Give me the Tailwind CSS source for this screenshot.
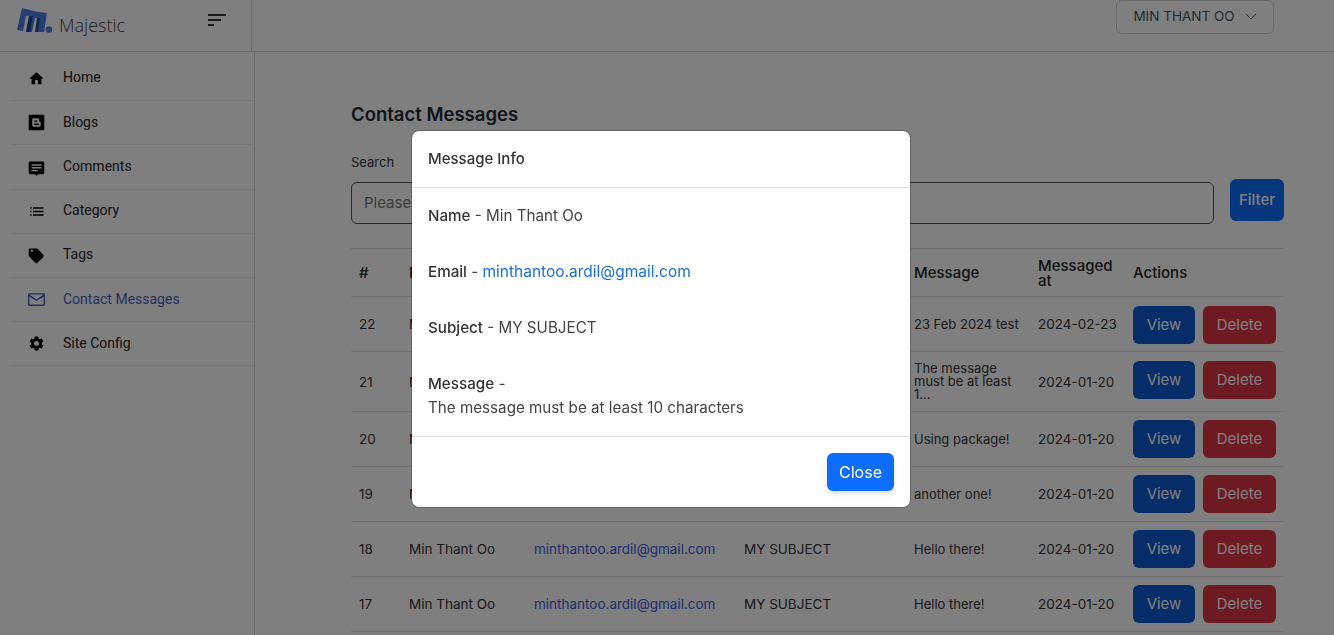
<!DOCTYPE html>
<html lang="en">
<head>
  <meta charset="UTF-8">
  <script src="https://cdn.jsdelivr.net/npm/@tailwindcss/browser@4"></script>
  <title>Contact Messages</title>
</head>
<body class="h-[635px] overflow-hidden bg-white font-['Inter',sans-serif] text-[#212529]">
  <!-- header -->
  <header class="flex h-[52px] border-b border-[#d8d8d8]">
    <div class="flex w-[252px] shrink-0 items-center border-r border-[#d8d8d8] pl-[17px]">
      <svg class="h-[26px] w-[36px] -translate-y-[5px]" viewBox="0 0 36 26">
        <path d="M5 0 L21 4 L30 5 L27 24 L19 24 L21 10 L18 10 L15 24 L9 24 L12 8 L9 8 L6 23 L0 22 Z" fill="#4d7fe0"/>
        <path d="M12 8 L16 8 L13 24 L9 24 Z" fill="#2348a0"/>
        <path d="M20 10 L23 10 L21 24 L18 24 Z" fill="#2348a0"/>
        <circle cx="32" cy="21.500" r="3.200" fill="#4d7fe0"/>
      </svg>
      <span class="ml-[6px] font-['Open_Sans',sans-serif] text-[18px] font-light text-[#3f3f46]">Majestic</span>
      <div class="ml-[83px] flex -translate-y-[6px] flex-col gap-[3px]">
        <span class="h-[2px] w-[18px] bg-[#333]"></span>
        <span class="h-[2px] w-[13px] bg-[#333]"></span>
        <span class="h-[2px] w-[6px] bg-[#333]"></span>
      </div>
    </div>
    <div class="flex flex-1 justify-end pr-[60px]">
      <button class="flex h-[34px] w-[158px] items-center justify-center gap-[10px] rounded-md border border-[#d5d5d5] pb-[2px] text-[13.500px] text-[#4b5563]">
        MIN THANT OO
        <svg class="h-[12px] w-[12px]" viewBox="0 0 12 12" fill="none" stroke="currentColor"><path d="M1 4l5 5 5-5"/></svg>
      </button>
    </div>
  </header>

  <div class="flex h-[583px]">
    <!-- sidebar -->
    <aside class="w-[255px] shrink-0 border-r border-[#d8d8d8] pl-[10px] font-['Roboto',sans-serif] text-[14px]">
      <nav class="flex flex-col">
        <a class="flex h-[49px] items-center gap-[18px] border-b border-[#eee] pl-[18px]">
          <svg class="h-[17px] w-[17px] translate-y-[2px]" viewBox="0 0 24 24" fill="#000"><path d="M10 20v-6h4v6h5v-8h3L12 3 2 12h3v8z"/></svg>
          <span class="translate-y-[1px] text-[#222]">Home</span>
        </a>
        <a class="flex h-[44px] items-center gap-[18px] border-b border-[#eee] pl-[18px]">
          <svg class="h-[17px] w-[17px]" viewBox="0 0 24 24"><path fill="#000" fill-rule="evenodd" d="M2 1h20a1 1 0 0 1 1 1v20a1 1 0 0 1-1 1H2a1 1 0 0 1-1-1V2a1 1 0 0 1 1-1zm6 5a2 2 0 0 0-2 2v8a2 2 0 0 0 2 2h8a2 2 0 0 0 2-2v-3a2 2 0 0 0-2-2v-2a3 3 0 0 0-3-3H8zm1.500 3h3a1 1 0 0 1 0 2h-3a1 1 0 0 1 0-2zm0 4.500h5a1 1 0 0 1 0 2h-5a1 1 0 0 1 0-2z"/></svg>
          <span class="text-[#222]">Blogs</span>
        </a>
        <a class="flex h-[45px] items-center gap-[18px] border-b border-[#eee] pl-[18px]">
          <svg class="h-[17px] w-[17px] translate-y-[1px]" viewBox="0 0 24 24" fill="#000"><path d="M21 2H3a2 2 0 0 0-2 2v14a2 2 0 0 0 2 2h7l3 3v-3h8a2 2 0 0 0 2-2V4a2 2 0 0 0-2-2zM5 6h14v2H5V6zm0 4h14v2H5v-2zm9 6H5v-2h9v2z"/></svg>
          <span class="-translate-y-[1px] text-[#222]">Comments</span>
        </a>
        <a class="flex h-[44px] items-center gap-[18px] border-b border-[#eee] pl-[18px]">
          <svg class="h-[17px] w-[17px]" viewBox="0 0 24 24" fill="#000"><path d="M3 13h2v-2H3v2zm0 5h2v-2H3v2zm0-10h2V6H3v2zm4 5h15v-2H7v2zm0 5h15v-2H7v2zM7 6v2h15V6H7z"/></svg>
          <span class="-translate-y-[1px] text-[#222]">Category</span>
        </a>
        <a class="flex h-[44px] items-center gap-[18px] border-b border-[#eee] pl-[18px]">
          <svg class="h-[17px] w-[17px]" viewBox="0 0 24 24" fill="#000"><path d="M22.410 11.580l-9-9C13.050 2.220 12.550 2 12 2H3c-1.100 0-2 .9-2 2v8c0 .55.22 1.050.59 1.420l9 9c.36.36.86.58 1.410.58.55 0 1.050-.22 1.410-.59l8-8c.37-.36.59-.86.59-1.410 0-.55-.23-1.060-.59-1.420zM5.500 7C4.670 7 4 6.330 4 5.500S4.670 4 5.500 4 7 4.670 7 5.500 6.330 7 5.500 7z"/></svg>
          <span class="-translate-y-[1px] text-[#222]">Tags</span>
        </a>
        <a class="flex h-[44px] items-center gap-[18px] border-b border-[#eee] pl-[18px]">
          <svg class="h-[17px] w-[17px]" viewBox="0 0 24 24" fill="#4b5fc0"><path d="M22 3H2a2 2 0 0 0-2 2v14a2 2 0 0 0 2 2h20a2 2 0 0 0 2-2V5a2 2 0 0 0-2-2zm0 16H2V8l10 6 10-6v11zM12 12L2 5h20l-10 7z"/></svg>
          <span class="text-[#4b5fc0]">Contact Messages</span>
        </a>
        <a class="flex h-[44px] items-center gap-[18px] border-b border-[#eee] pl-[18px]">
          <svg class="h-[17px] w-[17px]" viewBox="0 0 24 24" fill="#000"><path d="M19.430 12.980c.04-.32.07-.64.07-.98s-.03-.66-.07-.98l2.110-1.650c.19-.15.24-.42.12-.64l-2-3.460c-.12-.22-.39-.3-.61-.22l-2.490 1c-.52-.4-1.080-.73-1.690-.98l-.38-2.650C14.460 2.180 14.250 2 14 2h-4c-.25 0-.46.18-.49.42l-.38 2.650c-.61.25-1.170.59-1.690.98l-2.490-1c-.23-.09-.49 0-.61.22l-2 3.460c-.13.22-.07.49.12.64l2.110 1.650c-.04.32-.07.65-.07.98s.03.66.07.98l-2.110 1.650c-.19.15-.24.42-.12.64l2 3.460c.12.22.39.3.61.22l2.490-1c.52.4 1.080.73 1.690.98l.38 2.650c.03.24.24.42.49.42h4c.25 0 .46-.18.49-.42l.38-2.650c.61-.25 1.170-.59 1.690-.98l2.490 1c.23.09.49 0 .61-.22l2-3.460c.12-.22.07-.49-.12-.64l-2.110-1.650zM12 15.500c-1.930 0-3.500-1.570-3.500-3.500s1.570-3.500 3.500-3.500 3.500 1.570 3.500 3.500-1.570 3.500-3.500 3.500z"/></svg>
          <span class="text-[#222]">Site Config</span>
        </a>
      </nav>
    </aside>

    <!-- main -->
    <main class="w-[1029px] pl-[96px] pt-[50px]">
      <h1 class="text-[18.500px] leading-[24px] font-semibold text-[#1f2937]">Contact Messages</h1>
      <div class="mt-[28px] text-[13px] leading-[16px] text-[#333]">Search</div>
      <div class="mt-[9px] flex items-start gap-[16px]">
        <div class="mt-[3px] flex h-[42px] w-[863px] items-center rounded-md border border-[#555] px-[12px] text-[15px] text-[#777]">Please</div>
        <button class="h-[42px] w-[54px] rounded-md bg-[#0d6efd] text-[15px] font-medium text-white">Filter</button>
      </div>
      <table class="mt-[24px] w-[933px] table-fixed border-t border-[#ddd] text-[13.500px] leading-[14px] text-[#333]">
        <colgroup>
          <col class="w-[50px]"><col class="w-[125px]"><col class="w-[210px]"><col class="w-[170px]"><col class="w-[124px]"><col class="w-[95px]"><col class="w-[159px]">
        </colgroup>
        <thead class="text-[15px] text-[#222]">
          <tr class="h-[48px] border-b border-[#e5e5e5]">
            <th class="px-[8px] text-left font-medium">#</th>
            <th class="px-[8px] text-left font-medium">Name</th>
            <th class="px-[8px] text-left font-medium">Email</th>
            <th class="px-[8px] text-left font-medium">Subject</th>
            <th class="px-[8px] text-left font-medium">Message</th>
            <th class="px-[8px] text-left leading-[15px] font-medium">Messaged at</th>
            <th class="px-[8px] text-left font-medium">Actions</th>
          </tr>
        </thead>
        <tbody>
          <tr class="h-[55px] border-b border-[#e5e5e5]">
            <td class="px-[8px]">22</td><td class="px-[8px]">Min Thant Oo</td><td class="px-[8px] text-[#3b5bdb]">minthantoo.ardil@gmail.com</td><td class="px-[8px]">MY SUBJECT</td><td class="px-[8px] text-[13px]">23 Feb 2024 test</td><td class="px-[8px]">2024-02-23</td>
            <td class="px-[8px] pt-[9px] align-top"><div class="flex gap-[8px]"><button class="h-[38px] w-[62px] rounded-md bg-[#0d5bd0] text-[15px] text-white">View</button><button class="h-[38px] w-[73px] rounded-md bg-[#dc3545] text-[15px] text-white">Delete</button></div></td>
          </tr>
          <tr class="h-[60px] border-b border-[#e5e5e5]">
            <td class="px-[8px]">21</td><td class="px-[8px]">Min Thant Oo</td><td class="px-[8px] text-[#3b5bdb]">minthantoo.ardil@gmail.com</td><td class="px-[8px]">MY SUBJECT</td><td class="px-[8px] text-[13px] leading-[13px]">The message<br>must be at least<br>1...</td><td class="px-[8px]">2024-01-20</td>
            <td class="px-[8px] pt-[9px] align-top"><div class="flex gap-[8px]"><button class="h-[38px] w-[62px] rounded-md bg-[#0d5bd0] text-[15px] text-white">View</button><button class="h-[38px] w-[73px] rounded-md bg-[#dc3545] text-[15px] text-white">Delete</button></div></td>
          </tr>
          <tr class="h-[55px] border-b border-[#e5e5e5]">
            <td class="px-[8px]">20</td><td class="px-[8px]">Min Thant Oo</td><td class="px-[8px] text-[#3b5bdb]">minthantoo.ardil@gmail.com</td><td class="px-[8px]">MY SUBJECT</td><td class="px-[8px] text-[13px]">Using package!</td><td class="px-[8px]">2024-01-20</td>
            <td class="px-[8px] pt-[8px] align-top"><div class="flex gap-[8px]"><button class="h-[38px] w-[62px] rounded-md bg-[#0d5bd0] text-[15px] text-white">View</button><button class="h-[38px] w-[73px] rounded-md bg-[#dc3545] text-[15px] text-white">Delete</button></div></td>
          </tr>
          <tr class="h-[55px] border-b border-[#e5e5e5]">
            <td class="px-[8px]">19</td><td class="px-[8px]">Min Thant Oo</td><td class="px-[8px] text-[#3b5bdb]">minthantoo.ardil@gmail.com</td><td class="px-[8px]">MY SUBJECT</td><td class="px-[8px] text-[13px]">another one!</td><td class="px-[8px]">2024-01-20</td>
            <td class="px-[8px] pt-[8px] align-top"><div class="flex gap-[8px]"><button class="h-[38px] w-[62px] rounded-md bg-[#0d5bd0] text-[15px] text-white">View</button><button class="h-[38px] w-[73px] rounded-md bg-[#dc3545] text-[15px] text-white">Delete</button></div></td>
          </tr>
          <tr class="h-[55px] border-b border-[#e5e5e5]">
            <td class="px-[8px]">18</td><td class="px-[8px]">Min Thant Oo</td><td class="px-[8px] text-[#3b5bdb]">minthantoo.ardil@gmail.com</td><td class="px-[8px]">MY SUBJECT</td><td class="px-[8px] text-[13px]">Hello there!</td><td class="px-[8px]">2024-01-20</td>
            <td class="px-[8px] pt-[8px] align-top"><div class="flex gap-[8px]"><button class="h-[38px] w-[62px] rounded-md bg-[#0d5bd0] text-[15px] text-white">View</button><button class="h-[38px] w-[73px] rounded-md bg-[#dc3545] text-[15px] text-white">Delete</button></div></td>
          </tr>
          <tr class="h-[55px] border-b border-[#e5e5e5]">
            <td class="px-[8px]">17</td><td class="px-[8px]">Min Thant Oo</td><td class="px-[8px] text-[#3b5bdb]">minthantoo.ardil@gmail.com</td><td class="px-[8px]">MY SUBJECT</td><td class="px-[8px] text-[13px]">Hello there!</td><td class="px-[8px]">2024-01-20</td>
            <td class="px-[8px] pt-[8px] align-top"><div class="flex gap-[8px]"><button class="h-[38px] w-[62px] rounded-md bg-[#0d5bd0] text-[15px] text-white">View</button><button class="h-[38px] w-[73px] rounded-md bg-[#dc3545] text-[15px] text-white">Delete</button></div></td>
          </tr>
        </tbody>
      </table>
    </main>
  </div>

  <!-- modal -->
  <div class="fixed inset-0 flex justify-center bg-black/50 pt-[130px] pr-[12px]">
    <div class="h-[378px] w-[500px] rounded-lg border border-black/20 bg-white bg-clip-padding text-[15.200px] text-[#444]">
      <div class="flex h-[57px] items-center border-b border-[#dee2e6] px-[16px] text-[15px] font-medium text-[#333]">Message Info</div>
      <div class="h-[249px] border-b border-[#dee2e6] px-[16px] pt-[18px] leading-[20px]">
        <p class="h-[56px]"><b class="font-medium text-[#333]">Name</b> - Min Thant Oo</p>
        <p class="h-[56px]"><b class="font-medium text-[#333]">Email</b> - <a class="text-[15.500px] text-[#1a6fd8]">minthantoo.ardil@gmail.com</a></p>
        <p class="h-[56px]"><b class="font-medium text-[#333]">Subject</b> - MY SUBJECT</p>
        <p><b class="font-medium text-[#333]">Message</b> -</p>
        <p class="mt-[4px]">The message must be at least 10 characters</p>
      </div>
      <div class="flex justify-end px-[16px] pt-[16px]">
        <button class="h-[38px] w-[67px] rounded-md bg-[#0d6efd] text-[16px] text-white shadow-md">Close</button>
      </div>
    </div>
  </div>
</body>
</html>
